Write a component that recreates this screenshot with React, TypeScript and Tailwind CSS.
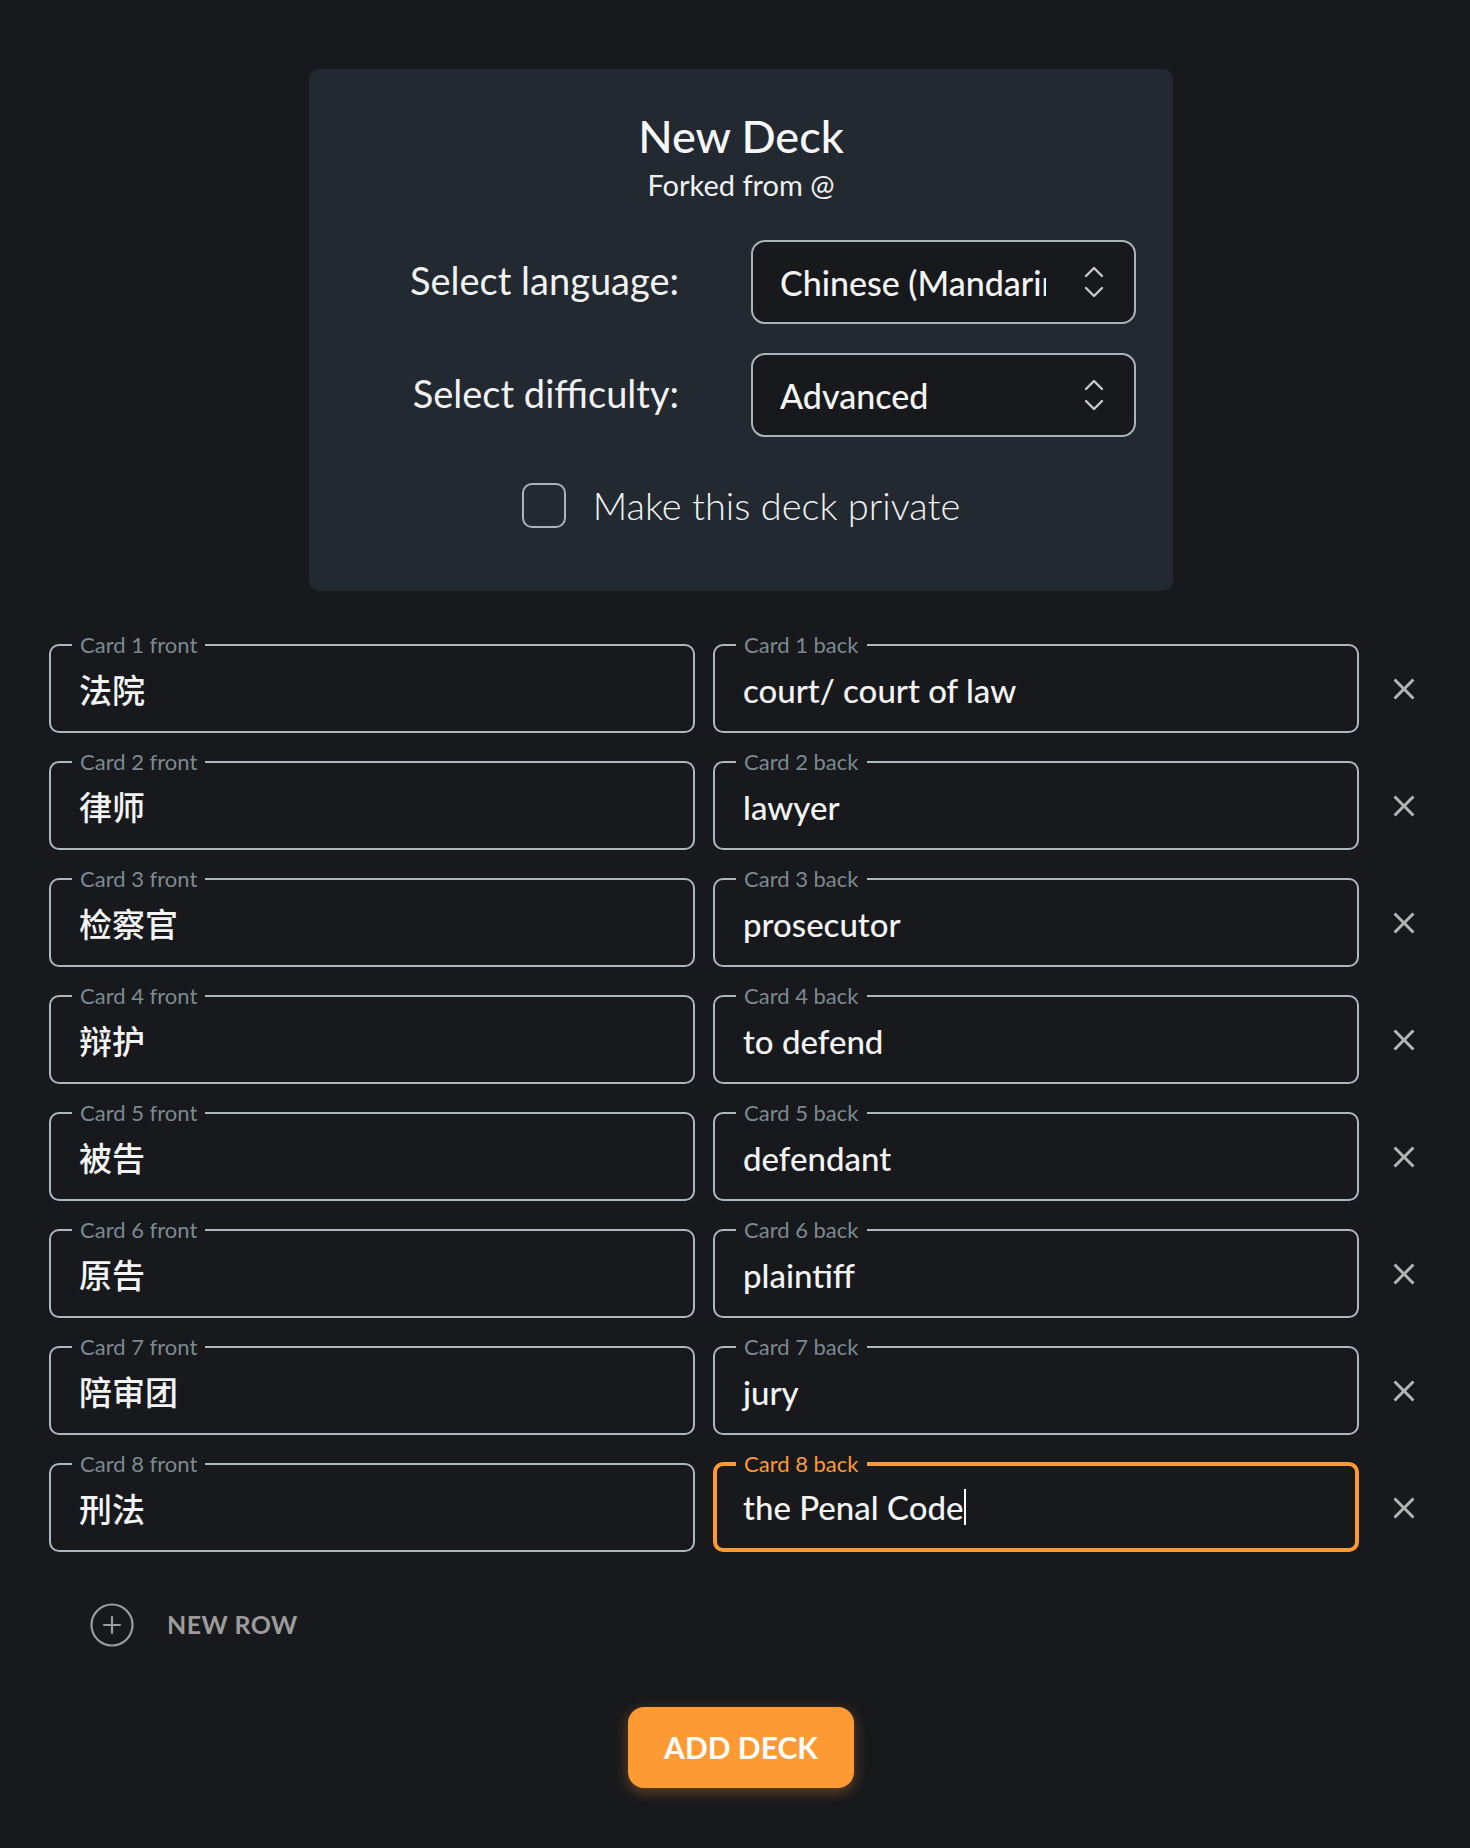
import { useState } from "react";

const cards = [
  { front: "法院", back: "court/ court of law" },
  { front: "律师", back: "lawyer" },
  { front: "检察官", back: "prosecutor" },
  { front: "辩护", back: "to defend" },
  { front: "被告", back: "defendant" },
  { front: "原告", back: "plaintiff" },
  { front: "陪审团", back: "jury" },
  { front: "刑法", back: "the Penal Code" },
];

const font = "font-['Lato','Noto_Sans_CJK_SC',sans-serif]";

const Chevrons = () => (
  <svg width="20" height="32" viewBox="0 0 20 32" fill="none" stroke="#c9c9c9" strokeWidth="2.4" strokeLinecap="round" strokeLinejoin="round">
    <path d="M2 10 L10 2 L18 10" />
    <path d="M2 22 L10 30 L18 22" />
  </svg>
);

const CloseIcon = () => (
  <svg width="36" height="36" viewBox="0 0 24 24" fill="#b4b4b4">
    <path d="M19 6.41 17.59 5 12 10.59 6.41 5 5 6.41 10.59 12 5 17.59 6.41 19 12 13.41 17.59 19 19 17.59 13.41 12z" />
  </svg>
);

const CardField = ({ label, value, focused }: { label: string; value: string; focused?: boolean }) => (
  <fieldset
    className={
      focused
        ? "h-[100px] w-[646px] rounded-[10px] border-4 border-[#fe9a33] pl-[19px] pr-4"
        : "h-[100px] w-[646px] rounded-[10px] border-2 border-[#adb9c0] pl-[21px] pr-4"
    }
  >
    <legend
      className={
        focused
          ? "px-[8px] text-[22px] leading-[24px] text-[#fe9a33]"
          : "px-[8px] text-[22px] leading-[24px] text-[#7b8a92]"
      }
    >
      {label}
    </legend>
    <div className={focused ? "mt-[11px] flex items-center pl-[7px]" : "mt-[13px] flex items-center pl-[7px]"}>
      <span className="text-[33px] leading-[40px] font-medium text-[#f4f4f4]">{value}</span>
      {focused && <span className="ml-[1px] h-[36px] w-[2px] bg-white" />}
    </div>
  </fieldset>
);

const App = () => {
  const [isPrivate, setIsPrivate] = useState(false); // deck private toggle

  return (
    <div className={`min-h-screen bg-[#18191c] pt-[69px] pb-[58px] ${font}`}>
      <div className="ml-[49px] w-[1384px]">
        {/* deck settings panel */}
        <div className="mx-auto w-[864px] rounded-[10px] bg-[#222930] pt-[41px] pb-[57px]">
          <h1 className="text-center text-[45px] leading-[52px] font-medium text-[#f7f7f7]">New Deck</h1>
          <p className="mt-[6px] text-center text-[29px] leading-[34px] text-[#f0f0f0]">Forked from @</p>

          <div className="mt-[38px] grid grid-cols-[370px_385px] gap-x-[72px] gap-y-[29px]">
            <div className="flex items-center justify-end pb-[4px] text-[38px] text-[#f2f2f2]">Select language:</div>
            <div className="flex h-[84px] items-center rounded-[14px] border-2 border-[#a9b4ba] bg-[#18191c] pl-[27px] pr-[30px]">
              <div className="w-[266px] overflow-hidden whitespace-nowrap text-[34px] font-medium text-[#f4f4f4]">
                Chinese (Mandarin)
              </div>
              <div className="ml-auto">
                <Chevrons />
              </div>
            </div>
            <div className="flex items-center justify-end pb-[4px] text-[38px] text-[#f2f2f2]">Select difficulty:</div>
            <div className="flex h-[84px] items-center rounded-[14px] border-2 border-[#a9b4ba] bg-[#18191c] pl-[27px] pr-[30px]">
              <div className="w-[266px] overflow-hidden whitespace-nowrap text-[34px] font-medium text-[#f4f4f4]">
                Advanced
              </div>
              <div className="ml-auto">
                <Chevrons />
              </div>
            </div>
          </div>

          <label className="mt-[40px] flex cursor-pointer items-center justify-center gap-[27px]">
            <button
              type="button"
              onClick={() => setIsPrivate(!isPrivate)}
              className={
                isPrivate
                  ? "h-[45px] w-[44px] rounded-[10px] border-2 border-[#fe9a33] bg-[#fe9a33]"
                  : "h-[45px] w-[44px] rounded-[10px] border-2 border-[#a9b4ba]"
              }
            />
            <span className="text-[38px] font-light text-[#f2f2f2]">Make this deck private</span>
          </label>
        </div>

        {/* card rows */}
        <div className="mt-[42px] flex flex-col gap-[17px]">
          {cards.map((card, i) => (
            <div key={i} className="flex items-center gap-[18px]">
              <CardField label={`Card ${i + 1} front`} value={card.front} />
              <CardField label={`Card ${i + 1} back`} value={card.back} focused={i === cards.length - 1} />
              <button type="button" className="ml-[9px] mt-[12px] flex h-[36px] w-[36px] items-center justify-center">
                <CloseIcon />
              </button>
            </div>
          ))}
        </div>

        <button type="button" className="mt-[51px] ml-[41px] flex items-center gap-[33px]">
          <svg width="44" height="44" viewBox="0 0 44 44" fill="none" stroke="#9c9c9c" strokeWidth="2.2" strokeLinecap="round">
            <circle cx="22" cy="22" r="20.5" />
            <path d="M22 14 V30 M14 22 H30" />
          </svg>
          <span className="text-[25px] font-bold tracking-[0.4px] text-[#9c9c9c]">NEW ROW</span>
        </button>

        <div className="mt-[60px] flex justify-center">
          <button
            type="button"
            className="h-[81px] w-[226px] rounded-[16px] bg-[#fe9a33] text-[30px] font-bold text-white shadow-[0_4px_14px_rgba(254,154,51,0.35)]"
          >
            ADD DECK
          </button>
        </div>
      </div>
    </div>
  );
};

export default App;
